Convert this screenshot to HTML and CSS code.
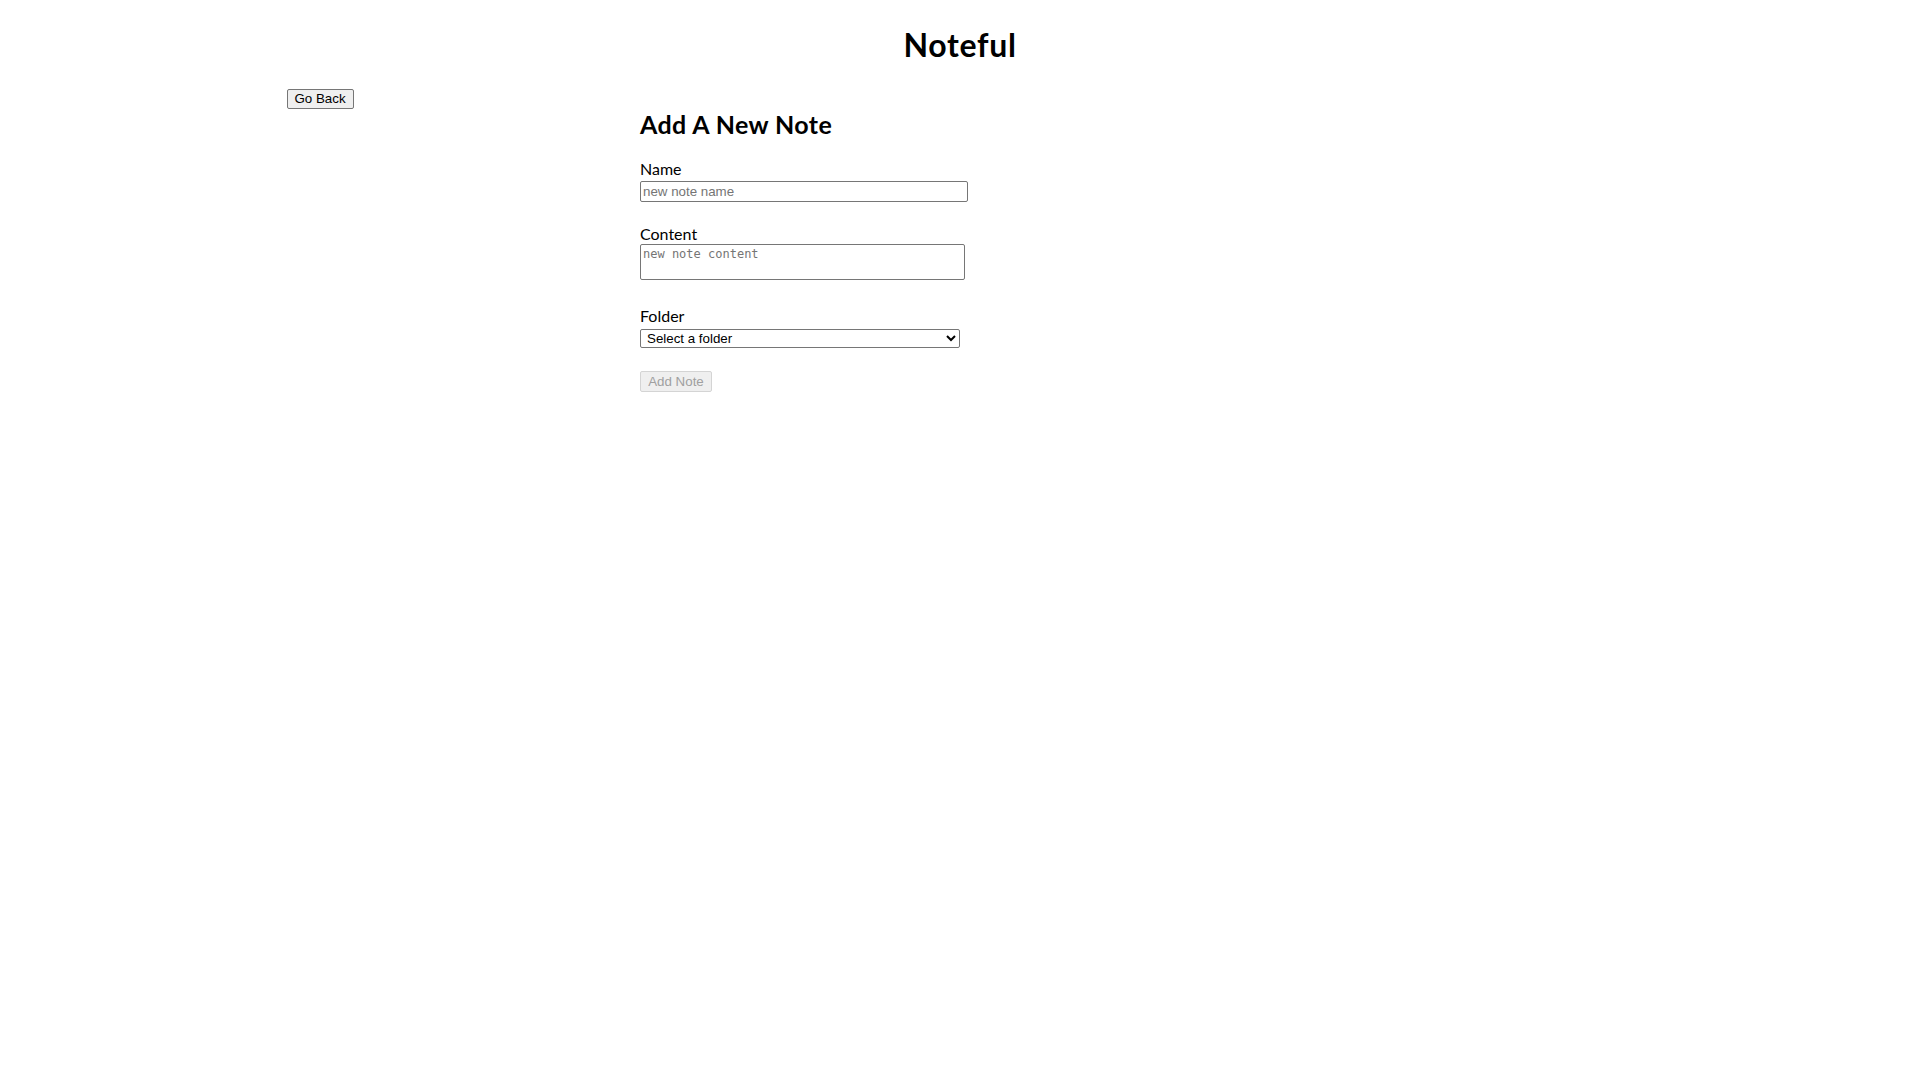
FILE: index.html
```html
<!DOCTYPE html>
<html lang="en">
<head>
<meta charset="utf-8">
<title>Noteful</title>
<link rel="stylesheet" href="styles.css">
</head>
<body>
<header class="app-header">
  <h1 class="app-title">Noteful</h1>
</header>
<div class="layout">
  <nav class="sidebar">
    <button class="btn back-btn" type="button">Go Back</button>
  </nav>
  <main class="main">
    <h2 class="form-title">Add A New Note</h2>
    <form class="note-form">
      <div class="field field-name">
        <label class="field-label" for="name">Name</label>
        <input class="text-input" id="name" type="text" placeholder="new note name">
      </div>
      <div class="field field-content">
        <label class="field-label" for="content">Content</label>
        <textarea class="text-area" id="content" placeholder="new note content"></textarea>
      </div>
      <div class="field field-folder">
        <label class="field-label" for="folder">Folder</label>
        <select class="select" id="folder">
          <option>Select a folder</option>
        </select>
      </div>
      <button class="btn submit-btn" type="submit" disabled>Add Note</button>
    </form>
  </main>
</div>
</body>
</html>
```

FILE: styles.css
```css
html, body {
  margin: 0;
  padding: 0;
  background: #ffffff;
}

body {
  font-family: Lato, "Noto Sans", sans-serif;
  color: #000;
}

.app-header {
  padding-top: 25px;
}

.app-title {
  margin: 0;
  text-align: center;
  font-size: 32px;
  font-weight: 700;
  line-height: 40px;
  letter-spacing: 0.7px;
}

.layout {
  display: grid;
  grid-template-columns: 640px 1fr;
}

.sidebar {
  display: flex;
  justify-content: center;
  align-items: flex-start;
  padding-top: 24px;
}

.btn {
  font-family: "Liberation Sans", Arial, sans-serif;
  font-size: 13.333px;
  line-height: 16px;
  height: 20px;
  padding: 1px 6px;
  border: 1px solid #767676;
  border-radius: 2px;
  background: #efefef;
  color: #000;
  box-sizing: border-box;
}

.back-btn {
  width: 67px;
  padding: 0;
}

.main {
  padding-top: 44px;
}

.form-title {
  margin: 0;
  font-size: 25px;
  font-weight: 700;
  line-height: 30px;
  letter-spacing: 0.4px;
}

.note-form {
  display: flex;
  flex-direction: column;
  align-items: flex-start;
}

.field {
  display: flex;
  flex-direction: column;
  align-items: flex-start;
}

.field-name {
  margin-top: 20px;
}

.field-content {
  margin-top: 22px;
}

.field-folder {
  margin-top: 26px;
}

.field-label {
  font-size: 16px;
  line-height: 20px;
}

.text-input {
  box-sizing: border-box;
  width: 328px;
  height: 21px;
  margin: 2px 0 0;
  padding: 1px 2px;
  border: 1px solid #767676;
  border-radius: 2px;
  font-family: "Liberation Sans", Arial, sans-serif;
  font-size: 13.333px;
}

.text-input::placeholder {
  color: #757575;
}

.text-area {
  box-sizing: border-box;
  width: 325px;
  height: 36px;
  margin: 0;
  padding: 2px;
  border: 1px solid #767676;
  border-radius: 2px;
  font-family: "DejaVu Sans Mono", "Liberation Mono", monospace;
  font-size: 12px;
  resize: none;
}

.text-area::placeholder {
  color: #757575;
}

.select {
  box-sizing: border-box;
  width: 320px;
  height: 19px;
  margin: 3px 0 0;
  padding: 0 0 0 2px;
  border: 1px solid #767676;
  border-radius: 2px;
  background: #fff;
  font-family: "Liberation Sans", Arial, sans-serif;
  font-size: 13.333px;
  color: #000;
}

.submit-btn {
  width: 72px;
  height: 21px;
  margin-top: 23px;
  color: #a0a0a0;
  border-color: #d4d4d4;
  background: #efefef;
}
```
